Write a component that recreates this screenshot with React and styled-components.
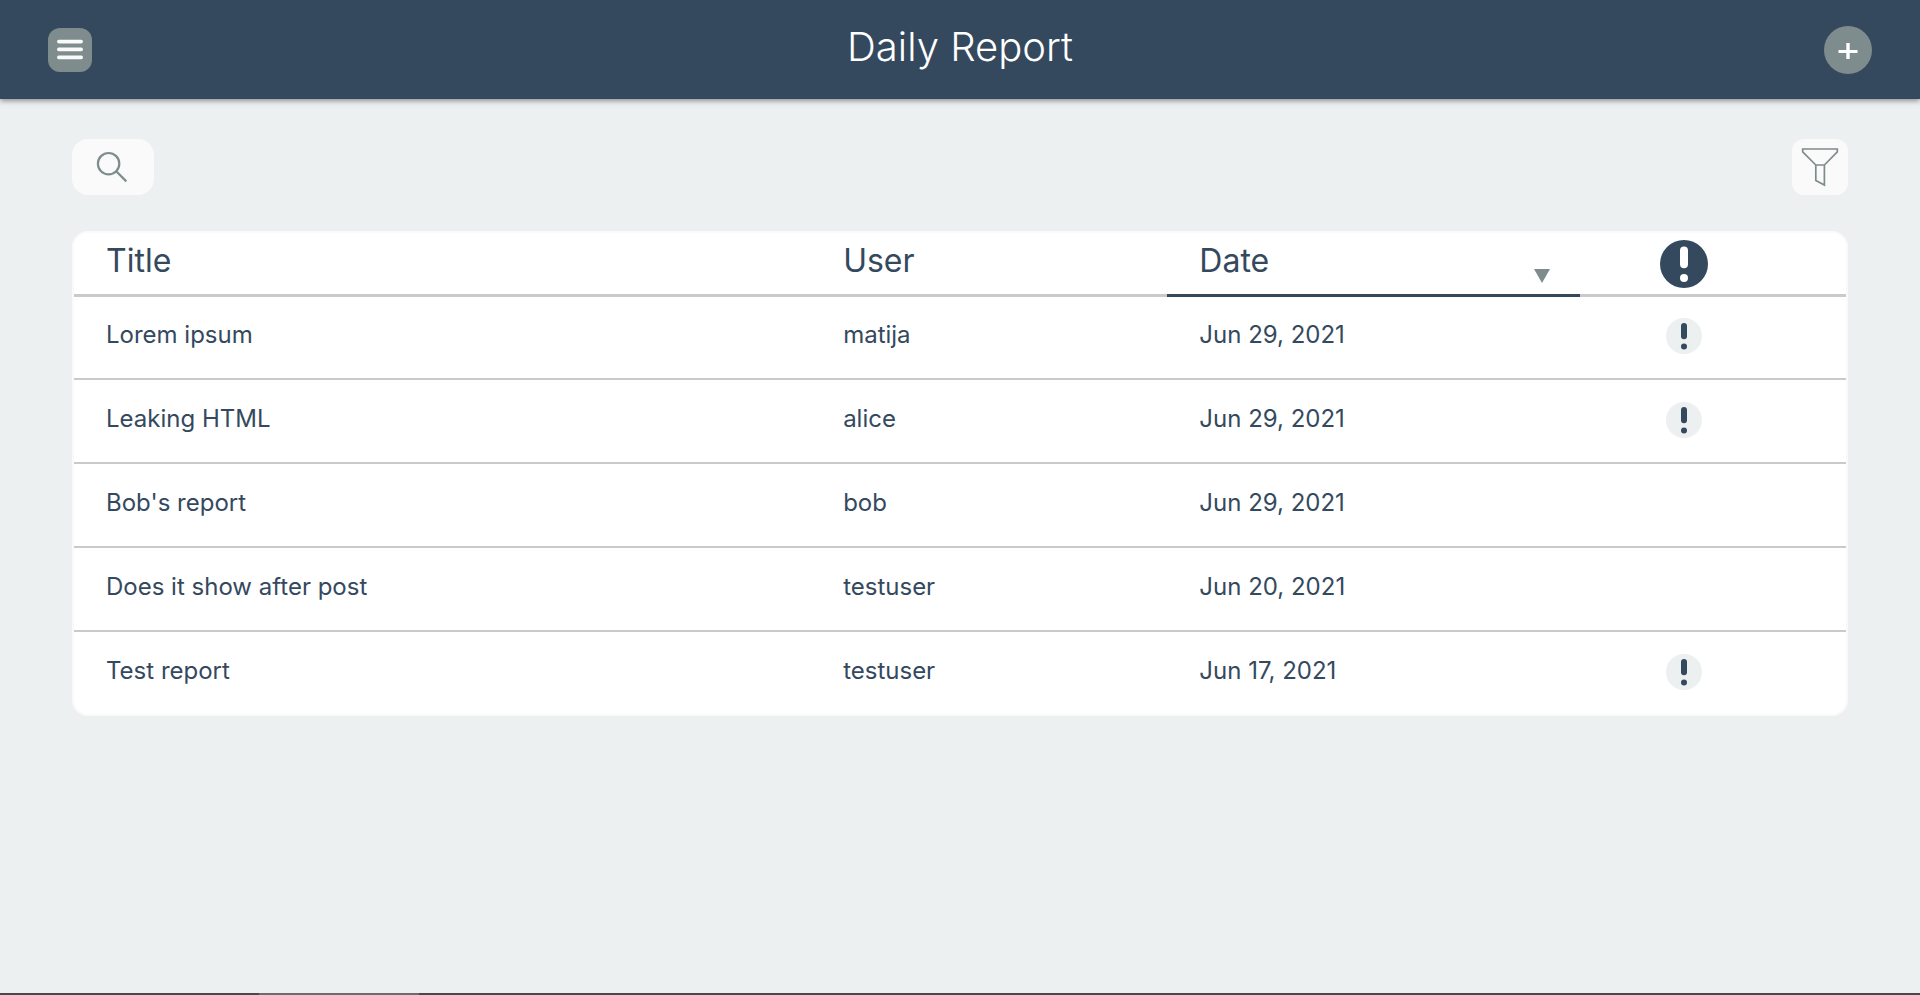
import React from "react";
import styled, { createGlobalStyle, css } from "styled-components";

const navy = "#34495e";
const grey = "#7f8c8d";
const cloud = "#ecf0f1";
const paper = "#fafafa";
const rule = "#cacaca";

const GlobalStyle = createGlobalStyle`
  *, *::before, *::after { box-sizing: border-box; }
  body {
    margin: 0;
    background: ${cloud};
    color: ${navy};
    font-family: Inter, "Open Sans", sans-serif;
  }
  button {
    margin: 0;
    padding: 0;
    border: 0;
    background: none;
    color: inherit;
    font: inherit;
    cursor: pointer;
  }
  svg { display: block; }
`;

const Page = styled.div`
  min-height: 100vh;
  display: flex;
  flex-direction: column;
`;

const Header = styled.header`
  display: grid;
  grid-template-columns: 1fr auto 1fr;
  align-items: center;
  padding: 26px 48px 25px;
  background: ${navy};
  box-shadow: 0 2px 5px rgba(60, 48, 52, 0.5);
`;

const PageTitle = styled.h1`
  margin: 0;
  padding-bottom: 6px;
  color: #fff;
  font-size: 40px;
  font-weight: 300;
  line-height: 42px;
`;

const MenuButton = styled.button`
  width: 44px;
  height: 44px;
  border-radius: 12px;
  background: ${grey};
`;

const AddButton = styled.button`
  justify-self: end;
  width: 48px;
  height: 48px;
  border-radius: 50%;
  background: ${grey};
`;

const Main = styled.main`
  flex: 1;
  display: flex;
  flex-direction: column;
  gap: 36px;
  padding: 40px 72px;
`;

const Toolbar = styled.div`
  display: flex;
  justify-content: space-between;
`;

const ToolButton = styled.button`
  width: ${({ $wide }) => ($wide ? "82px" : "56px")};
  height: 56px;
  border-radius: ${({ $wide }) => ($wide ? "16px" : "12px")};
  background: ${paper};
  color: ${grey};
`;

const TableCard = styled.div`
  border: 2px solid ${paper};
  border-radius: 16px;
  background: #fff;
  overflow: hidden;
`;

const Table = styled.table`
  width: 100%;
  table-layout: fixed;
  border-collapse: separate;
  border-spacing: 0;
`;

const iconCell = css`
  padding-left: 0;
  padding-right: 58px;
`;

const HeadCell = styled.th`
  width: ${({ $width }) => $width};
  padding: 7px 30px 6px 32px;
  border-bottom: 3px solid ${({ $sorted }) => ($sorted ? navy : rule)};
  font-size: 32px;
  font-weight: 400;
  line-height: 42px;
  text-align: left;
  ${({ $icon }) => $icon && iconCell}
`;

const SortButton = styled.button`
  width: 100%;
  height: 48px;
  display: flex;
  justify-content: ${({ $center }) => ($center ? "center" : "space-between")};
  align-items: flex-start;
`;

const SortArrow = styled.svg`
  align-self: flex-end;
  margin-bottom: 5px;
`;

const Row = styled.tr`
  &:last-child > td {
    border-bottom: 0;
    height: 82px;
  }
`;

const Cell = styled.td`
  height: 84px;
  padding: 22px 32px;
  border-bottom: 2px solid ${rule};
  font-size: 24px;
  line-height: 34px;
  vertical-align: top;
  ${({ $icon }) => $icon && iconCell}

  tr:first-child > & {
    height: 83px;
    padding-top: 21px;
  }
`;

const AlertSvg = styled.svg`
  margin: 0 auto;
`;

const BottomStrip = styled.footer`
  display: grid;
  grid-template-columns: 259px 160px 1fr;
  height: 2px;
  background: #484848;
`;

const StripThumb = styled.span`
  grid-column: 2;
  background: #6c6c6c;
`;

function AlertIcon({ size, disc, mark, label }) {
  return (
    <AlertSvg width={size} height={size} viewBox="0 0 48 48" role="img" aria-label={label}>
      <circle cx="24" cy="24" r="24" fill={disc} />
      <rect x="20" y="6.5" width="8" height="21.8" rx="4" fill={mark} />
      <circle cx="24" cy="38" r="4" fill={mark} />
    </AlertSvg>
  );
}

const reports = [
  { title: "Lorem ipsum", user: "matija", date: "Jun 29, 2021", alert: true },
  { title: "Leaking HTML", user: "alice", date: "Jun 29, 2021", alert: true },
  { title: "Bob's report", user: "bob", date: "Jun 29, 2021", alert: false },
  { title: "Does it show after post", user: "testuser", date: "Jun 20, 2021", alert: false },
  { title: "Test report", user: "testuser", date: "Jun 17, 2021", alert: true },
];

export default function App() {
  return (
    <Page>
      <GlobalStyle />
      <Header>
        <MenuButton type="button" aria-label="Menu">
          <svg width="44" height="44" viewBox="0 0 44 44" stroke={paper} strokeWidth="3.6" strokeLinecap="round">
            <path d="M10.8 13.6H33.2M10.8 21.4H33.2M10.8 29.4H33.2" />
          </svg>
        </MenuButton>
        <PageTitle>Daily Report</PageTitle>
        <AddButton type="button" aria-label="Add report">
          <svg width="48" height="48" viewBox="0 0 48 48" fill="#fff">
            <rect x="14.5" y="24" width="19" height="3" />
            <rect x="22.3" y="17" width="3.4" height="16" />
          </svg>
        </AddButton>
      </Header>

      <Main>
        <Toolbar>
          <ToolButton type="button" $wide aria-label="Search">
            <svg width="82" height="56" viewBox="0 0 82 56" fill="none" stroke="currentColor" strokeWidth="2.2">
              <circle cx="36.6" cy="24.7" r="10.7" />
              <path d="M44.2 32.3L54.3 42.4" />
            </svg>
          </ToolButton>
          <ToolButton type="button" aria-label="Filter">
            <svg width="56" height="56" viewBox="0 0 56 56" fill="none" stroke="currentColor" strokeWidth="1.7">
              <path d="M10.7 10H45.3V12.8L32.4 26V46L23.8 41.4V26L10.7 12.8ZM23.8 26H32.4" />
            </svg>
          </ToolButton>
        </Toolbar>

        <TableCard>
          <Table>
            <thead>
              <tr>
                <HeadCell $width="41.6%">
                  <SortButton type="button">Title</SortButton>
                </HeadCell>
                <HeadCell $width="20.1%">
                  <SortButton type="button">User</SortButton>
                </HeadCell>
                <HeadCell $width="23.3%" $sorted aria-sort="descending">
                  <SortButton type="button">
                    Date
                    <SortArrow width="16" height="14" viewBox="0 0 16 14" fill={grey} aria-hidden="true">
                      <path d="M0 0H16L8 14Z" />
                    </SortArrow>
                  </SortButton>
                </HeadCell>
                <HeadCell $icon>
                  <SortButton type="button" $center>
                    <AlertIcon size={48} disc={navy} mark="#fff" label="Alert" />
                  </SortButton>
                </HeadCell>
              </tr>
            </thead>
            <tbody>
              {reports.map((report) => (
                <Row key={report.title}>
                  <Cell>{report.title}</Cell>
                  <Cell>{report.user}</Cell>
                  <Cell>{report.date}</Cell>
                  <Cell $icon>
                    {report.alert && <AlertIcon size={36} disc={cloud} mark={navy} label="Has alert" />}
                  </Cell>
                </Row>
              ))}
            </tbody>
          </Table>
        </TableCard>
      </Main>

      <BottomStrip>
        <StripThumb />
      </BottomStrip>
    </Page>
  );
}
